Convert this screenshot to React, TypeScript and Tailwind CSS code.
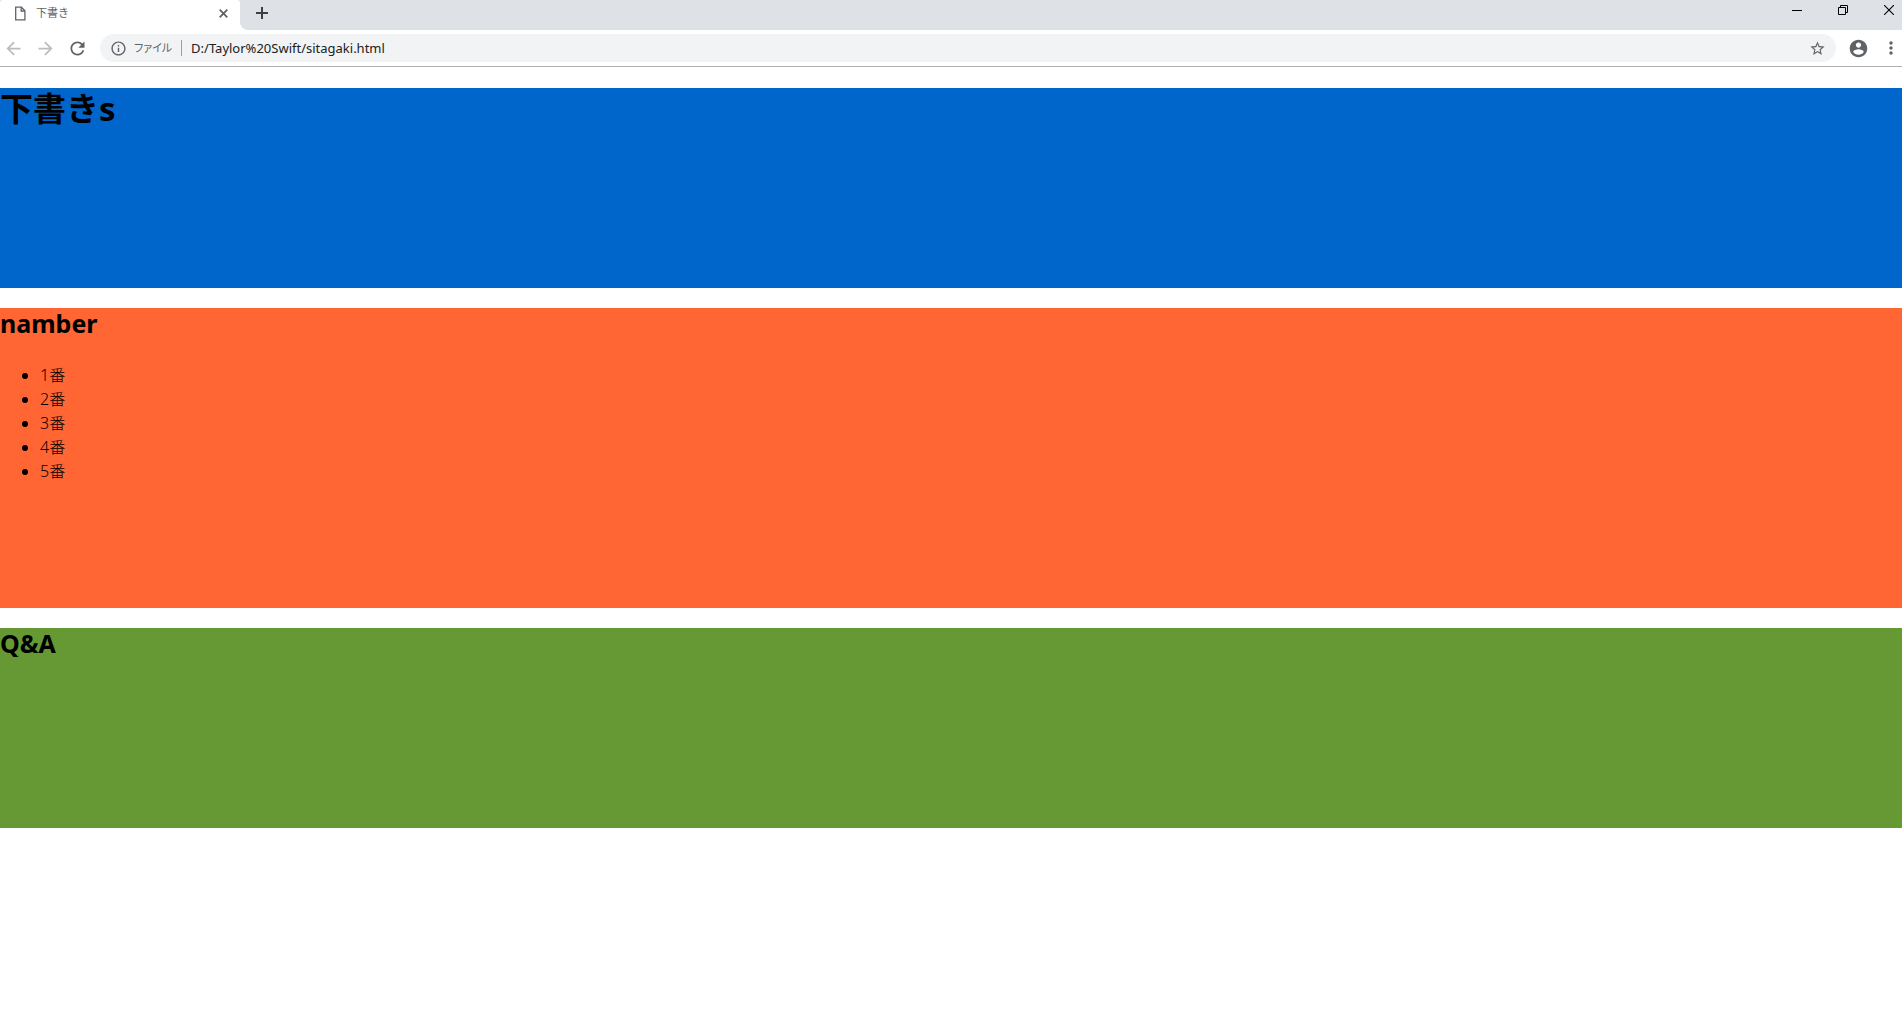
import React from "react";

const uiFont = "font-['Noto_Sans','Noto_Sans_CJK_JP',sans-serif]";

function TabStrip() {
  return (
    <div className="flex h-[30px]">
      <div className="w-60 bg-[#dee1e6]">
        <div className="flex h-full items-center rounded-t-[3px] bg-white pr-[11px] pl-[15px] pb-1">
          <svg width="11" height="15" viewBox="0 0 11 15" fill="none" stroke="#5f6368" strokeWidth="1.3" aria-hidden="true">
            <path d="M.7 1.2H6.4L9.9 4.8V13.9H.7Z" />
            <path d="M6.2 1.2V5H9.9" />
          </svg>
          <span className="ml-2.5 flex-1 text-[11px] leading-4 text-[#5f6368]">下書き</span>
          <button aria-label="タブを閉じる" className="flex size-3 items-center justify-center">
            <svg width="9" height="9" viewBox="0 0 9 9" stroke="#5f6368" strokeWidth="1.8">
              <path d="M.7 .7L8.3 8.3M8.3 .7L.7 8.3" />
            </svg>
          </button>
        </div>
      </div>
      <div className="flex flex-1 items-start rounded-bl-lg bg-[#dee1e6] pl-4">
        <button aria-label="新しいタブ" className="mt-[7px]">
          <svg width="12" height="12" viewBox="0 0 12 12" stroke="#3c4043" strokeWidth="2" className="block">
            <path d="M6 0V12M0 6H12" />
          </svg>
        </button>
        <div className="ml-auto flex h-5">
          <button aria-label="最小化" className="flex w-[46px] items-center justify-center">
            <svg width="10" height="10" viewBox="0 0 10 10" stroke="#000">
              <path d="M0 5.5H10" />
            </svg>
          </button>
          <button aria-label="元に戻す" className="flex w-[46px] items-center justify-center">
            <svg width="10" height="10" viewBox="0 0 10 10" fill="none" stroke="#000">
              <path d="M.5 2.5H7.5V9.5H.5ZM2.5 2.5V.5H9.5V7.5H7.5" />
            </svg>
          </button>
          <button aria-label="閉じる" className="flex w-9 items-center justify-center pl-2.5">
            <svg width="10" height="10" viewBox="0 0 10 10" stroke="#000" strokeWidth="1.1">
              <path d="M0 0L10 10M10 0L0 10" />
            </svg>
          </button>
        </div>
      </div>
    </div>
  );
}

function Glyph({ d, className }: { d: string; className: string }) {
  return (
    <svg viewBox="0 0 24 24" fill="currentColor" className={className} aria-hidden="true">
      <path d={d} />
    </svg>
  );
}

function Toolbar() {
  return (
    <div className="flex h-[37px] items-center border-b border-[#b0b0b0] pr-px pl-[3px]">
      <div className="flex gap-[11px]">
        <button aria-label="戻る" className="text-[#babcbe]">
          <Glyph className="size-[21px]" d="M20 11H7.83l5.59-5.59L12 4l-8 8 8 8 1.41-1.41L7.83 13H20v-2z" />
        </button>
        <button aria-label="進む" className="text-[#babcbe]">
          <Glyph className="size-[21px]" d="M12 4l-1.41 1.41L16.17 11H4v2h12.17l-5.58 5.59L12 20l8-8z" />
        </button>
        <button aria-label="再読み込み" className="text-[#5f6368]">
          <Glyph
            className="size-[21px]"
            d="M17.65 6.35C16.2 4.9 14.21 4 12 4c-4.42 0-7.99 3.58-7.99 8s3.57 8 7.99 8c3.73 0 6.84-2.55 7.73-6h-2.08c-.82 2.33-3.04 4-5.65 4-3.31 0-6-2.69-6-6s2.69-6 6-6c1.66 0 3.14.69 4.22 1.78L13 11h7V4l-2.35 2.35z"
          />
        </button>
      </div>
      <div className="ml-3 flex h-7 flex-1 items-center rounded-full bg-[#f1f3f4] px-2.5">
        <button aria-label="サイト情報" className="text-[#5f6368]">
          <Glyph
            className="size-[17px]"
            d="M11 17h2v-6h-2v6zm1-15C6.48 2 2 6.48 2 12s4.48 10 10 10 10-4.48 10-10S17.52 2 12 2zm0 18c-4.41 0-8-3.59-8-8s3.59-8 8-8 8 3.59 8 8-3.59 8-8 8zM11 9h2V7h-2v2z"
          />
        </button>
        <label htmlFor="url" className="ml-[7px] text-[11px] leading-4 text-[#5f6368] [font-feature-settings:'palt']">
          ファイル
        </label>
        <span className="ml-[9px] h-4 w-px bg-[#9aa0a6]" />
        <input
          id="url"
          type="text"
          defaultValue="D:/Taylor%20Swift/sitagaki.html"
          className="ml-[9px] h-5 min-w-0 flex-1 bg-transparent text-[13px] text-[#202124] outline-none"
        />
        <button aria-label="ブックマーク" className="text-[#5f6368]">
          <Glyph
            className="size-[17px]"
            d="M22 9.24l-7.19-.62L12 2 9.19 8.63 2 9.24l5.46 4.73L5.82 21 12 17.27 18.18 21l-1.63-7.03L22 9.24zM12 15.4l-3.76 2.27 1-4.28-3.32-2.88 4.38-.38L12 6.1l1.71 4.04 4.38.38-3.32 2.88 1 4.28L12 15.4z"
          />
        </button>
      </div>
      <button aria-label="プロフィール" className="ml-3 text-[#5f6368]">
        <Glyph
          className="size-[21px]"
          d="M12 2C6.48 2 2 6.48 2 12s4.48 10 10 10 10-4.48 10-10S17.52 2 12 2zm0 3c1.66 0 3 1.34 3 3s-1.34 3-3 3-3-1.34-3-3 1.34-3 3-3zm0 14.2c-2.5 0-4.71-1.28-6-3.22.03-1.99 4-3.08 6-3.08 1.99 0 5.97 1.09 6 3.08-1.29 1.94-3.5 3.22-6 3.22z"
        />
      </button>
      <button aria-label="メニュー" className="ml-3 text-[#5f6368]">
        <Glyph
          className="size-5"
          d="M12 8c1.1 0 2-.9 2-2s-.9-2-2-2-2 .9-2 2 .9 2 2 2zm0 2c-1.1 0-2 .9-2 2s.9 2 2 2 2-.9 2-2-.9-2-2-2zm0 6c-1.1 0-2 .9-2 2s.9 2 2 2 2-.9 2-2-.9-2-2-2z"
        />
      </button>
    </div>
  );
}

const items = ["1番", "2番", "3番", "4番", "5番"];

export default function App() {
  return (
    <div className={`min-h-screen bg-white text-black ${uiFont}`}>
      <header>
        <TabStrip />
        <Toolbar />
      </header>
      <main className="mt-[21px] flex flex-col gap-5">
        <section className="min-h-[200px] bg-[#0066cc]">
          <h1 className="text-[33px] leading-[42px] font-bold">下書きs</h1>
        </section>
        <section className="min-h-[300px] bg-[#ff6633]">
          <h2 className="text-[25px] leading-[30px] font-bold">namber</h2>
          <ul className="mt-[25px] list-disc pl-10 text-base leading-6 font-light">
            {items.map((item) => (
              <li key={item}>{item}</li>
            ))}
          </ul>
        </section>
        <section className="min-h-[200px] bg-[#669933]">
          <h2 className="text-[25px] leading-[30px] font-bold">Q&amp;A</h2>
        </section>
      </main>
    </div>
  );
}
